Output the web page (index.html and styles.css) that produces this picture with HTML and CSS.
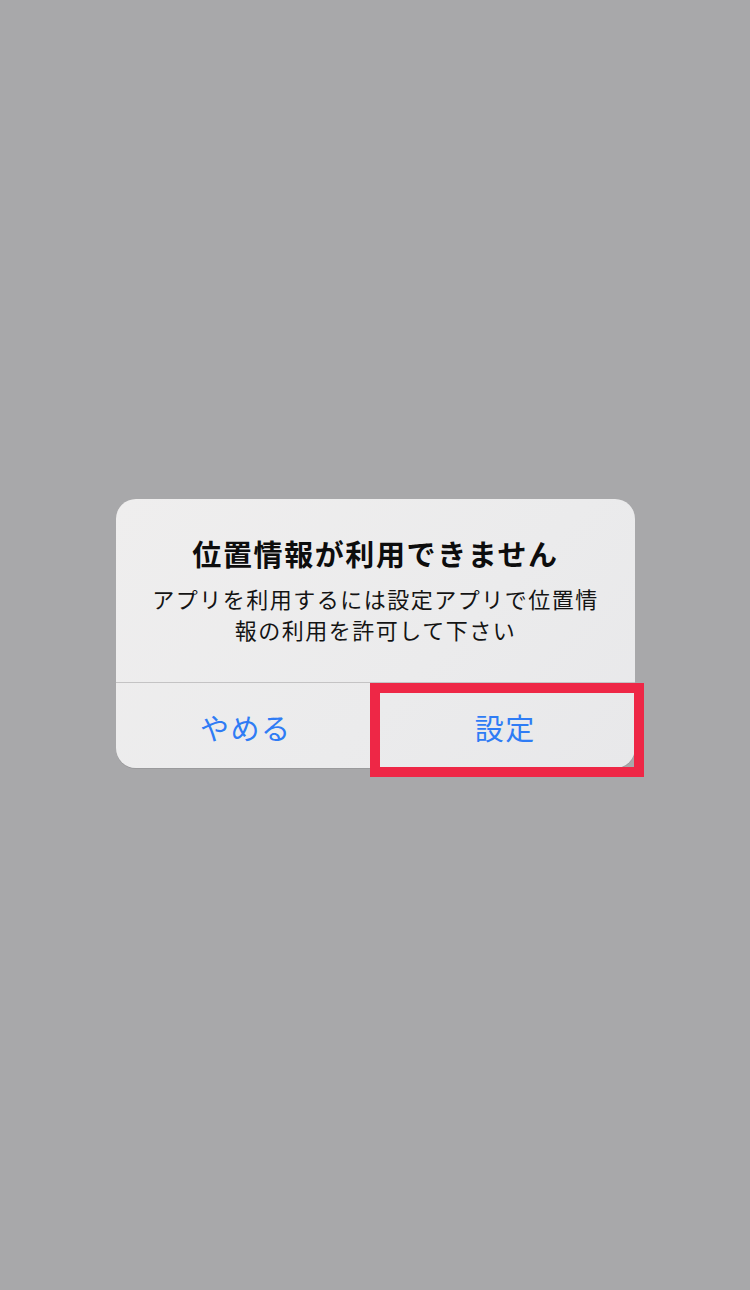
FILE: index.html
```html
<!DOCTYPE html>
<html lang="ja">
<head>
<meta charset="utf-8">
<link rel="stylesheet" href="styles.css">
</head>
<body>
<div class="screen">
  <div class="alert">
    <div class="content">
      <div class="title">位置情報が利用できません</div>
      <div class="message">アプリを利用するには設定アプリで位置情<br>報の利用を許可して下さい</div>
    </div>
    <div class="actions">
      <div class="btn">やめる</div>
      <div class="btn">設定</div>
    </div>
    <div class="highlight"></div>
  </div>
</div>
</body>
</html>
```
FILE: styles.css
```css
html, body {
  margin: 0;
  padding: 0;
  background: #a8a8aa;
}
.screen {
  width: 750px;
  height: 1290px;
  padding-top: 499px;
  box-sizing: border-box;
  font-family: "Noto Sans CJK JP", "Noto Sans", sans-serif;
}
.alert {
  position: relative;
  margin-left: 116px;
  width: 519px;
  height: 269px;
  border-radius: 20px;
  background: linear-gradient(135deg, #efeeee 0%, #ebebec 60%, #e8e8ea 100%);
  box-shadow: 0 1px 0 #9a9a9c;
  display: flex;
  flex-direction: column;
}
.content {
  height: 184px;
  border-bottom: 1px solid #c4c3c4;
  display: flex;
  flex-direction: column;
  align-items: center;
  padding-top: 34px;
  box-sizing: border-box;
}
.title {
  font-size: 29px;
  font-weight: 700;
  color: #0d0d0d;
  line-height: 40px;
  letter-spacing: 1.6px;
}
.message {
  margin-top: 10px;
  font-size: 22px;
  color: #141414;
  line-height: 31px;
  text-align: center;
  letter-spacing: 1.5px;
}
.actions {
  flex: 1;
  display: flex;
}
.btn {
  flex: 1;
  display: flex;
  align-items: center;
  justify-content: center;
  font-size: 29px;
  color: #2f7cf5;
  letter-spacing: 1.5px;
  padding-top: 2px;
}
.highlight {
  position: absolute;
  left: 254px;
  top: 184px;
  width: 274px;
  height: 94px;
  border: 10px solid #ee2746;
  box-sizing: border-box;
}
```
